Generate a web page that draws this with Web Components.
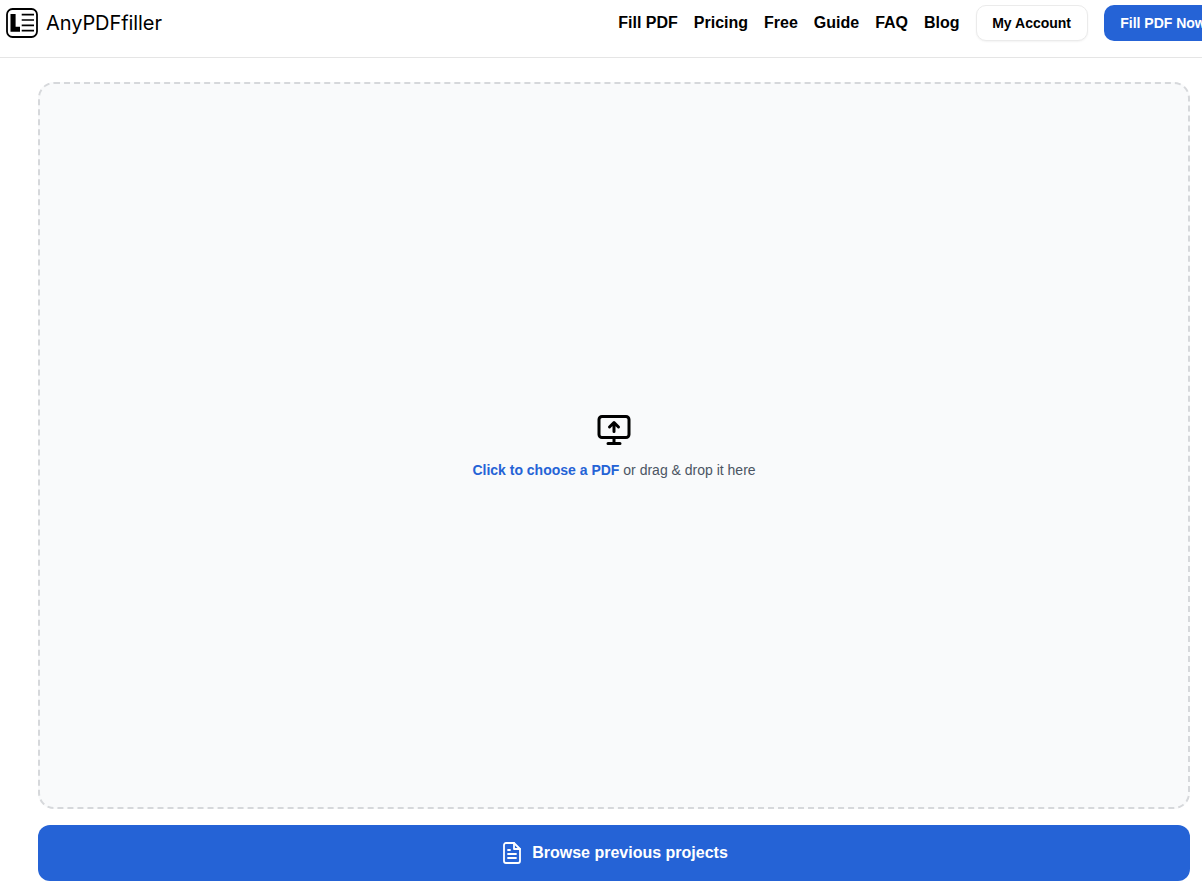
<!DOCTYPE html>
<html lang="en">
<head>
<meta charset="utf-8">
<title>AnyPDFfiller</title>
<style>
  html, body { margin: 0; height: 100%; background: #fff; overflow: hidden; }
  body { font-family: "Liberation Sans", Arial, sans-serif; }
</style>
</head>
<body>
<site-header></site-header>
<upload-page></upload-page>

<script>
// site-header.js
class SiteHeader extends HTMLElement {
  constructor() {
    super();
    this.attachShadow({ mode: 'open' });
    this.shadowRoot.innerHTML = `
      <style>
        :host {
          display: flex;
          align-items: center;
          height: 46px;
          box-sizing: content-box;
          border-bottom: 1px solid #e5e5e5;
          padding: 0 0 11px 6px;
          overflow: hidden;
          white-space: nowrap;
        }
        .brand {
          display: flex;
          align-items: center;
          gap: 8px;
          font: 400 20px Inter, sans-serif;
          letter-spacing: -0.08px;
          color: #000;
          flex: none;
        }
        .brand svg { width: 32px; height: 30px; display: block; }
        nav {
          display: flex;
          align-items: center;
          gap: 16px;
          margin-left: 456.400px;
          flex: none;
          font-weight: 700;
          font-size: 16px;
          color: #000;
        }
        .btn {
          display: flex;
          align-items: center;
          box-sizing: border-box;
          height: 36px;
          padding: 0 16px;
          border-radius: 10px;
          font-size: 14px;
          font-weight: 700;
        }
        .account {
          width: 112px;
          margin-left: 0.600px;
          padding: 0 15px;
          background: #fff;
          border: 1px solid #ebebeb;
          box-shadow: 0 1px 2px rgba(0,0,0,.05);
        }
        .cta { background: #2563d6; color: #fff; }
      </style>
      <div class="brand">
        <svg viewBox="0 0 32 30" fill="none">
          <rect x="1" y="1" width="30" height="28" rx="5.500" stroke="#000" stroke-width="1.800"/>
          <path d="M4.500 6h5.100v12.700H14v5H4.500z" fill="#000"/>
          <path d="M15.700 6.700H28M15.700 12H28M15.700 17.300H28M15.700 22.700H28" stroke="#000" stroke-width="1.700"/>
        </svg>
        <span>AnyPDFfiller</span>
      </div>
      <nav>
        <span>Fill PDF</span>
        <span>Pricing</span>
        <span>Free</span>
        <span>Guide</span>
        <span>FAQ</span>
        <span>Blog</span>
        <span class="btn account">My Account</span>
        <span class="btn cta">Fill PDF Now</span>
      </nav>
    `;
  }
}
customElements.define('site-header', SiteHeader);

// drop-zone.js
class DropZone extends HTMLElement {
  constructor() {
    super();
    this.attachShadow({ mode: 'open' });
    this.shadowRoot.innerHTML = `
      <style>
        :host {
          display: flex;
          flex-direction: column;
          align-items: center;
          justify-content: center;
          gap: 12px;
          flex: 1;
          min-height: 0;
          box-sizing: border-box;
          background: #f9fafb;
          border: 2px dashed #d6d8db;
          border-radius: 16px;
          font-size: 14px;
          line-height: 20px;
          color: #4b5563;
          cursor: pointer;
        }
        svg { width: 36px; height: 36px; display: block; }
        b { color: #2563d6; }
      </style>
      <svg viewBox="0 0 24 24" fill="none" stroke="#000" stroke-width="2" stroke-linecap="round" stroke-linejoin="round">
        <rect x="2" y="3" width="20" height="14" rx="2"/>
        <path d="M12 17v4M8 21h8M12 13V7M9 10l3-3 3 3"/>
      </svg>
      <div><b>Click to choose a PDF</b> or drag &amp; drop it here</div>
    `;
  }
}
customElements.define('drop-zone', DropZone);

// browse-button.js
class BrowseButton extends HTMLElement {
  constructor() {
    super();
    this.attachShadow({ mode: 'open' });
    this.shadowRoot.innerHTML = `
      <style>
        :host {
          display: flex;
          align-items: center;
          justify-content: center;
          gap: 8px;
          flex: none;
          height: 56px;
          background: #2563d6;
          border-radius: 12px;
          color: #fff;
          font-size: 16px;
          font-weight: 700;
          cursor: pointer;
        }
        svg { width: 24px; height: 24px; display: block; }
      </style>
      <svg viewBox="0 0 24 24" fill="none" stroke="#fff" stroke-width="1.800" stroke-linecap="round" stroke-linejoin="round">
        <path d="M14 2H6a2 2 0 0 0-2 2v16a2 2 0 0 0 2 2h12a2 2 0 0 0 2-2V8z"/>
        <path d="M14 2v6h6M16 13H8M16 17H8M10 9H8"/>
      </svg>
      <slot></slot>
    `;
  }
}
customElements.define('browse-button', BrowseButton);

// upload-page.js
class UploadPage extends HTMLElement {
  constructor() {
    super();
    this.attachShadow({ mode: 'open' });
    this.shadowRoot.innerHTML = `
      <style>
        :host {
          display: flex;
          flex-direction: column;
          gap: 16px;
          height: 823px;
          box-sizing: border-box;
          padding: 24px 12px 0 38px;
        }
      </style>
      <drop-zone></drop-zone>
      <browse-button>Browse previous projects</browse-button>
    `;
  }
}
customElements.define('upload-page', UploadPage);
</script>
</body>
</html>
